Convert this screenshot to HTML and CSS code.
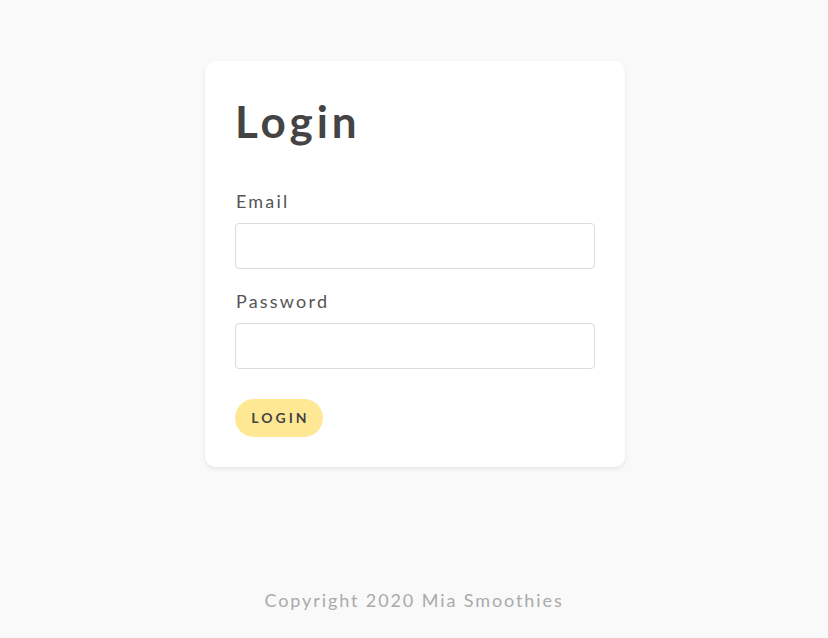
FILE: index.html
```html
<!DOCTYPE html>
<html lang="en">
<head>
<meta charset="utf-8">
<title>Login</title>
<link rel="stylesheet" href="styles.css">
</head>
<body>
<main class="page">
  <section class="card">
    <h1 class="title">Login</h1>
    <form class="form">
      <div class="field">
        <label class="label" for="email">Email</label>
        <input class="input" id="email" type="email">
      </div>
      <div class="field">
        <label class="label" for="password">Password</label>
        <input class="input" id="password" type="password">
      </div>
      <button class="btn" type="button">Login</button>
    </form>
  </section>
</main>
<footer class="footer">Copyright 2020 Mia Smoothies</footer>
</body>
</html>
```
FILE: styles.css
```css
html, body {
  margin: 0;
  padding: 0;
}
body {
  background: #f9f9f9;
  font-family: "Lato", "Open Sans", sans-serif;
  color: #444;
  height: 638px;
  display: flex;
  flex-direction: column;
  align-items: center;
}
.page {
  padding-top: 61px;
  padding-left: 2px;
  display: flex;
  justify-content: center;
  width: 100%;
  box-sizing: border-box;
}
.card {
  width: 420px;
  box-sizing: border-box;
  background: #fff;
  border-radius: 10px;
  padding: 30px 30px 30px 30px;
  box-shadow: 0 2px 4px rgba(0,0,0,0.08);
}
.title {
  margin: 4px 0 40px 0;
  font-size: 44px;
  line-height: 1.2;
  font-weight: 700;
  color: #444;
  letter-spacing: 3.9px;
}
.form {
  display: flex;
  flex-direction: column;
}
.field {
  display: flex;
  flex-direction: column;
  margin-bottom: 19px;
}
.field + .btn { margin-top: 11px; }
.label {
  font-size: 18px;
  line-height: 27px;
  color: #555;
  letter-spacing: 2.2px;
  margin-bottom: 8px;
  margin-left: 1px;
  font-weight: 400;
}
.input {
  height: 46px;
  box-sizing: border-box;
  border: 1px solid #dcdcdc;
  border-radius: 4px;
  background: #fff;
  font-size: 16px;
  padding: 0 12px;
  outline: none;
}
.btn {
  align-self: flex-start;
  width: 88px;
  height: 38px;
  border: none;
  border-radius: 19px;
  background: #ffe894;
  color: #444;
  font-family: inherit;
  font-weight: 700;
  font-size: 14px;
  letter-spacing: 3px;
  text-transform: uppercase;
  padding: 0 0 0 3px;
  cursor: pointer;
}
.footer {
  margin-top: auto;
  margin-bottom: 24px;
  font-size: 18px;
  line-height: 27px;
  color: #aaa;
  letter-spacing: 1.9px;
}
```
